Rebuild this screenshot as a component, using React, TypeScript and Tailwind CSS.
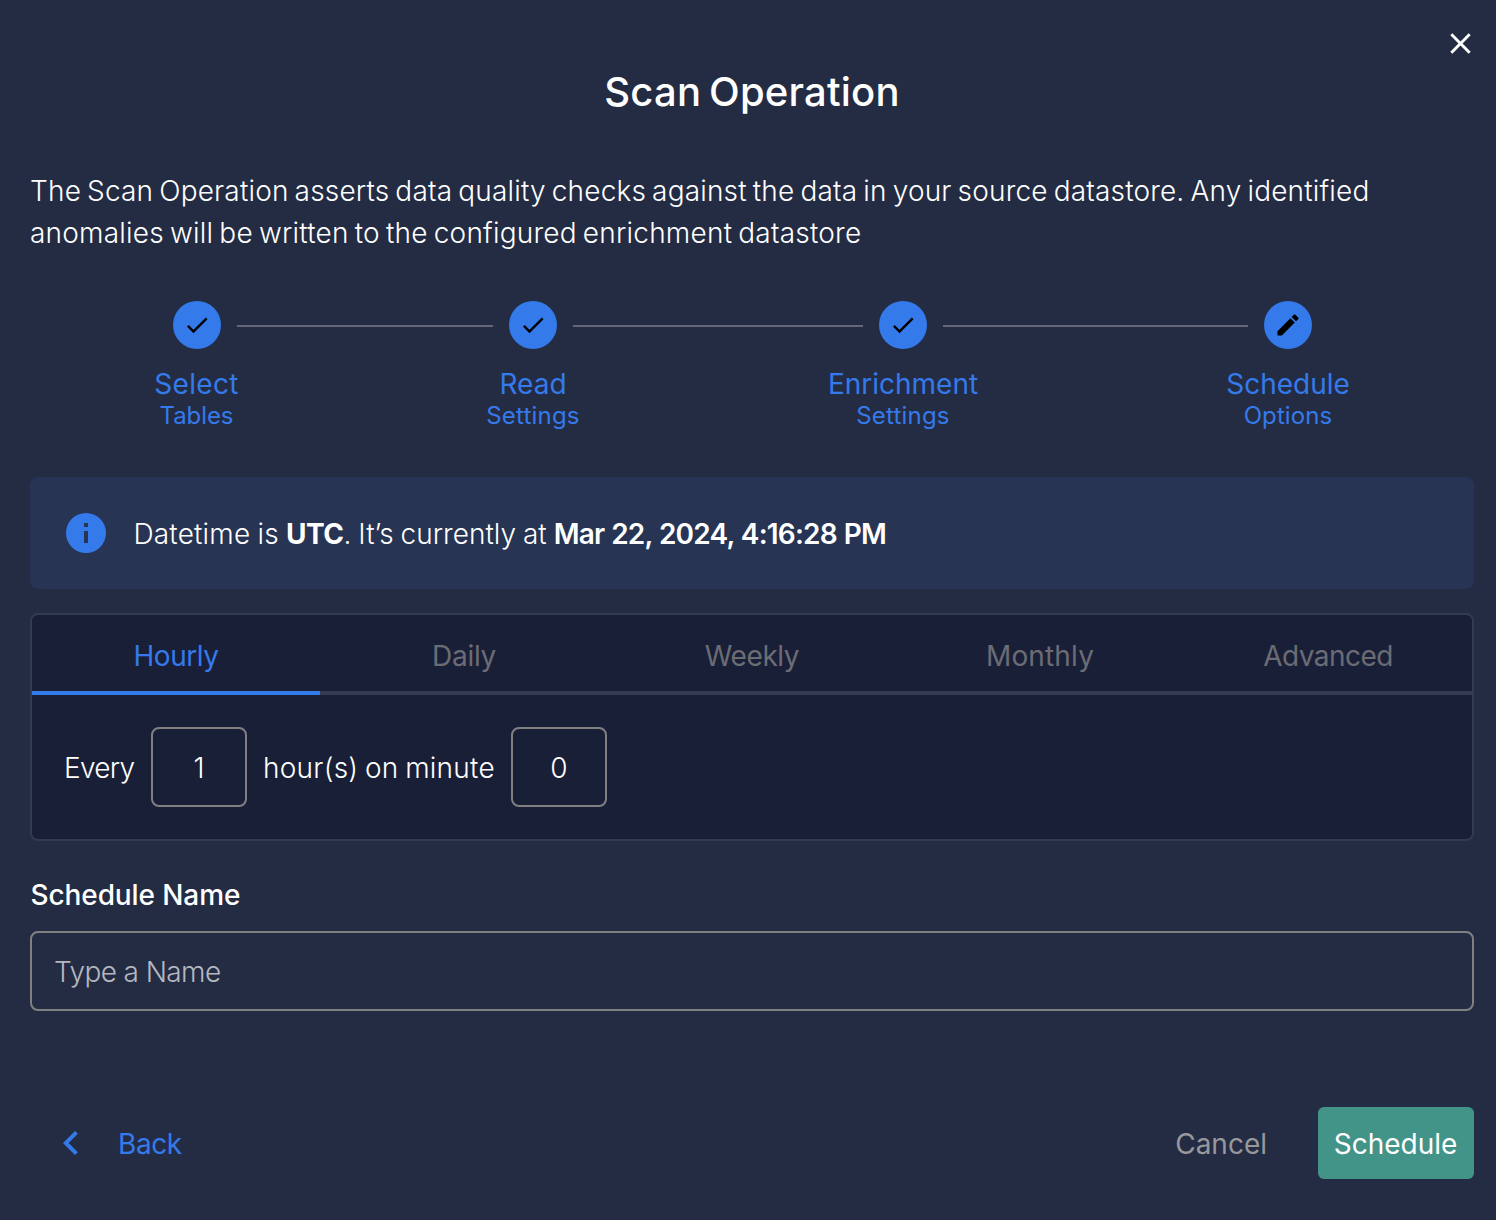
const ICONS = {
  close: "M19 6.41 17.59 5 12 10.59 6.41 5 5 6.41 10.59 12 5 17.59 6.41 19 12 13.41 17.59 19 19 17.59 13.41 12 19 6.41Z",
  check: "M21 7 9 19l-5.5-5.5 1.41-1.41L9 16.17 19.59 5.59 21 7Z",
  pencil:
    "M20.71 7.04c.39-.39.39-1.04 0-1.41l-2.34-2.34c-.37-.39-1.02-.39-1.41 0l-1.84 1.83 3.75 3.75M3 17.25V21h3.75L17.81 9.93l-3.75-3.75L3 17.25Z",
  info: "M13 9h-2V7h2m0 10h-2v-6h2m-1-9A10 10 0 0 0 2 12a10 10 0 0 0 10 10 10 10 0 0 0 10-10A10 10 0 0 0 12 2Z",
  chevronLeft: "M15.41 16.58 10.83 12l4.58-4.59L14 6l-6 6 6 6 1.41-1.42Z",
};

function Icon({ name, className }: { name: keyof typeof ICONS; className: string }) {
  return (
    <svg viewBox="0 0 24 24" fill="currentColor" aria-hidden="true" className={className}>
      <path d={ICONS[name]} />
    </svg>
  );
}

type StepProps = {
  icon: "check" | "pencil";
  title: string;
  subtitle: string;
  titleClass?: string;
  subtitleClass?: string;
};

function Step({ icon, title, subtitle, titleClass = "", subtitleClass = "" }: StepProps) {
  return (
    <div className="flex w-12 shrink-0 flex-col items-center whitespace-nowrap text-[#347aeb]">
      <span className="flex size-12 items-center justify-center rounded-full bg-[#347aeb] text-black">
        <Icon name={icon} className="size-7" />
      </span>
      <span className={`mt-[19px] text-[28px] leading-8 ${titleClass}`}>{title}</span>
      <span className={`text-[24px] leading-8 ${subtitleClass}`}>{subtitle}</span>
    </div>
  );
}

function Connector({ width }: { width: string }) {
  return <div className={`mx-4 mt-6 h-0.5 shrink-0 bg-[#64677a] ${width}`} />;
}

const TABS = [
  { label: "Hourly", spacing: "tracking-[-0.47px]" },
  { label: "Daily", spacing: "tracking-[-0.28px]" },
  { label: "Weekly", spacing: "tracking-[-0.4px]" },
  { label: "Monthly", spacing: "tracking-[0.15px]" },
  { label: "Advanced", spacing: "tracking-[-0.55px]" },
];

export default function App() {
  return (
    <div className="flex h-[1220px] w-[1496px] flex-col bg-[#242c44] pr-[22px] pl-[30px] font-['Inter',sans-serif] text-[28px] text-white">
      <div className="flex h-[68px] justify-end pt-[26px]">
        <button type="button" aria-label="Close" className="-mr-[3px] flex size-[34px] items-center justify-center">
          <Icon name="close" className="size-[35px] shrink-0" />
        </button>
      </div>

      <h1 className="h-12 text-center text-[40px] leading-12 font-medium tracking-[0.2px] [word-spacing:-3px]">
        Scan Operation
      </h1>

      <p className="mt-[54px] leading-[42px] font-light whitespace-nowrap [word-spacing:-2px]">
        <span className="block tracking-[0.17px]">
          The Scan Operation asserts data quality checks against the data in your source datastore. Any identified
        </span>
        <span className="block tracking-[0.21px]">anomalies will be written to the configured enrichment datastore</span>
      </p>

      <div className="mt-[47px] flex pl-[143px]">
        <Step icon="check" title="Select" subtitle="Tables" titleClass="-ml-px tracking-[0.3px]" subtitleClass="-ml-px tracking-[-0.1px]" />
        <Connector width="w-64" />
        <Step icon="check" title="Read" subtitle="Settings" subtitleClass="tracking-[0.2px]" />
        <Connector width="w-[290px]" />
        <Step icon="check" title="Enrichment" subtitle="Settings" subtitleClass="tracking-[0.2px]" />
        <Connector width="w-[305px]" />
        <Step icon="pencil" title="Schedule" subtitle="Options" subtitleClass="tracking-[0.1px]" />
      </div>

      <div className="mt-[45px] flex h-28 shrink-0 items-center rounded-lg bg-[#273453] pl-[32.4px]">
        <Icon name="info" className="size-12 text-[#347aeb]" />
        <p className="ml-[23px] pt-0.5 font-light whitespace-pre [word-spacing:-1px]">
          <span className="tracking-[0.2px]">Datetime is </span>
          <b className="font-bold tracking-[-0.5px]">UTC</b>
          <span className="tracking-[0.02px]">. It’s currently at </span>
          <b className="font-semibold tracking-[-0.79px] [word-spacing:0.6px]">Mar 22, 2024, 4:16:28 PM</b>
        </p>
      </div>

      <section className="mt-6 h-[228px] shrink-0 rounded-lg border-2 border-[#343a4f] bg-[#1a1f38]">
        <div className="grid h-20 grid-cols-5">
          {TABS.map((tab, i) => (
            <button
              type="button"
              key={tab.label}
              className={`border-b-4 pt-1.5 ${tab.spacing} ${
                i === 0 ? "border-[#347aeb] text-[#347aeb]" : "border-[#343a4f] text-[#6b6c74]"
              }`}
            >
              {tab.label}
            </button>
          ))}
        </div>
        <div className="flex h-36 items-center pl-8 font-light">
          <label className="w-[87px] pt-0.5 tracking-[-0.7px]">Every</label>
          <div className="flex h-20 w-24 items-center justify-center rounded-lg border-2 border-[#808080] pt-0.5">1</div>
          <label className="w-[264px] pt-0.5 pl-4 tracking-[0.25px] [word-spacing:-1.5px]">hour(s) on minute</label>
          <div className="flex h-20 w-24 items-center justify-center rounded-lg border-2 border-[#808080] pt-0.5">0</div>
        </div>
      </section>

      <h2 className="mt-[34px] pl-[0.5px] leading-10 font-medium tracking-[-0.1px]">Schedule Name</h2>
      <div className="mt-4 flex h-20 shrink-0 items-center rounded-lg border-2 border-[#808080] pt-0.5 pl-[22px] font-light tracking-[-0.6px] text-[#b5b8c0]">
        Type a Name
      </div>

      <div className="mt-24 flex h-[72px] items-center">
        <button type="button" className="flex items-center pl-[16.5px] text-[#347aeb]">
          <Icon name="chevronLeft" className="size-12" />
          <span className="pt-0.5 pl-[23.5px] tracking-[-0.4px]">Back</span>
        </button>
        <button type="button" className="mr-[51px] ml-auto pt-0.5 text-[#97989c]">
          Cancel
        </button>
        <button type="button" className="h-[72px] w-39 rounded-md bg-[#439488] pt-0.5 pr-px">
          Schedule
        </button>
      </div>
    </div>
  );
}
